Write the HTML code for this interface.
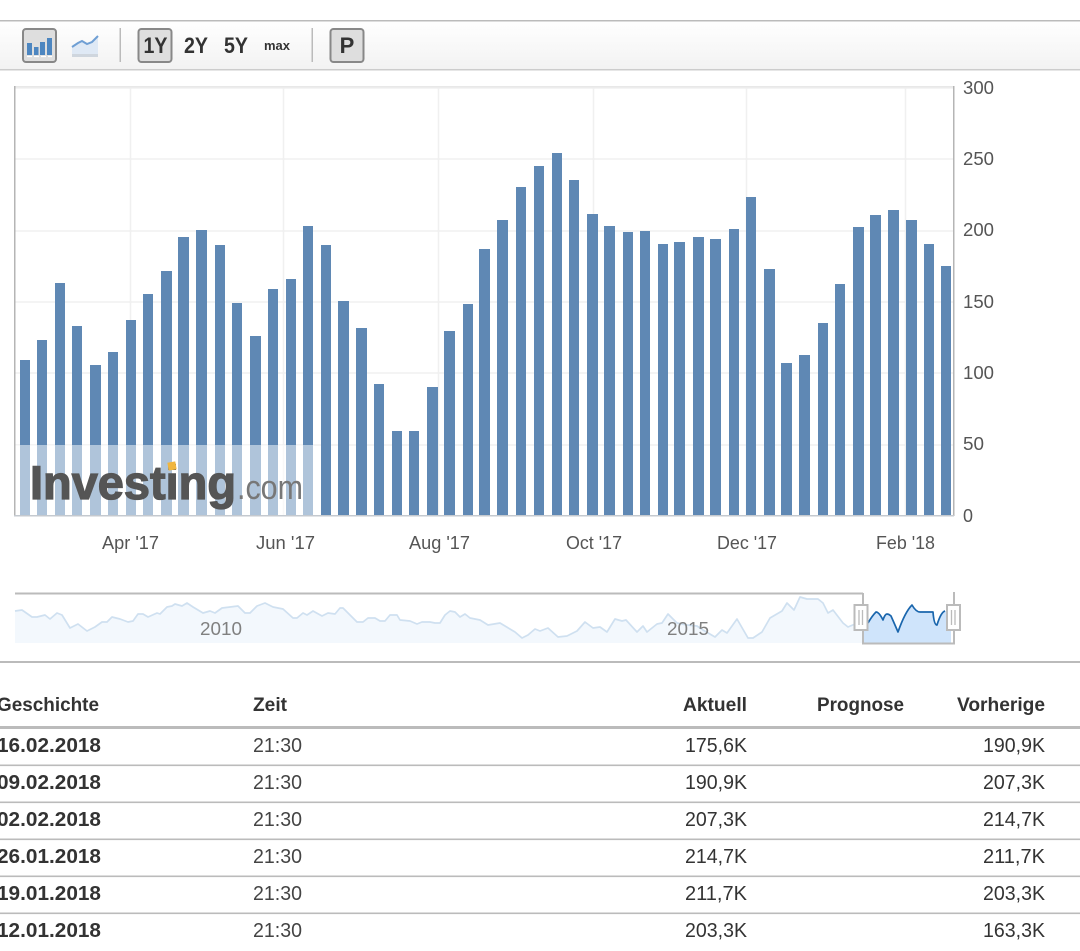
<!DOCTYPE html>
<html lang="de"><head><meta charset="utf-8"><title>Chart</title>
<style>
html,body{margin:0;padding:0;background:#fff;width:1080px;height:951px;overflow:hidden}
svg{display:block;font-family:"Liberation Sans",sans-serif;filter:blur(.3px)}
.ax{font-size:18.5px;fill:#555}
.th{font-size:19.5px;font-weight:bold;fill:#333}
.d{font-size:20.5px;font-weight:bold;fill:#333}
.t{font-size:20px;fill:#444}
.n{font-size:20px;fill:#333;text-anchor:end}
.tb{font-size:22px;font-weight:bold;fill:#333;text-anchor:middle}
</style></head><body>
<svg width="1080" height="951" viewBox="0 0 1080 951" xmlns="http://www.w3.org/2000/svg">
<defs><linearGradient id="g" x1="0" y1="0" x2="0" y2="1"><stop offset="0" stop-color="#fff"/><stop offset="1" stop-color="#f2f2f2"/></linearGradient></defs>
<!-- toolbar -->
<rect x="0" y="20" width="1080" height="50" fill="url(#g)"/>
<rect x="0" y="20" width="1080" height="1.5" fill="#bbb"/>
<rect x="0" y="69" width="1080" height="1.5" fill="#ccc"/>
<rect x="23" y="29" width="33" height="33" rx="3" fill="#dedede" stroke="#888" stroke-width="2"/>
<path d="M27 43h5v12h-5zM34 47h4.500v8h-4.500zM40 42h5v13h-5zM47 38h5v17h-5z" fill="#4d86c0"/>
<path d="M27 56.500h25" stroke="#fff" stroke-width="1.200" stroke-dasharray="5 2"/>
<path d="M72 47l6-4 4-2 5 3 5-2 6-6v20H72z" fill="#dfe9f5"/>
<path d="M72 47l6-4 4-2 5 3 5-2 6-6" fill="none" stroke="#6f9fd4" stroke-width="2"/>
<rect x="72" y="54" width="26" height="3" fill="#cfd6de"/>
<rect x="119.500" y="28" width="1.500" height="34" fill="#bbb"/>
<rect x="138.500" y="29" width="33" height="33" rx="3" fill="#dedede" stroke="#888" stroke-width="2"/>
<text x="155.500" y="53" class="tb" textLength="24" lengthAdjust="spacingAndGlyphs">1Y</text>
<text x="196" y="53" class="tb" textLength="24" lengthAdjust="spacingAndGlyphs">2Y</text>
<text x="236" y="53" class="tb" textLength="24" lengthAdjust="spacingAndGlyphs">5Y</text>
<text x="277" y="50" font-size="13" font-weight="bold" fill="#333" text-anchor="middle" textLength="26" lengthAdjust="spacingAndGlyphs">max</text>
<rect x="311.500" y="28" width="1.500" height="34" fill="#bbb"/>
<rect x="330.500" y="29" width="33" height="33" rx="3" fill="#dedede" stroke="#888" stroke-width="2"/>
<text x="347" y="53" class="tb">P</text>
<!-- grid -->
<path d="M15 88H953M15 159H953M15 231H953M15 302H953M15 373H953M15 445H953M130.500 87V515M283.500 87V515M438.500 87V515M593.500 87V515M746.500 87V515M905.500 87V515" stroke="#f0f0f0" stroke-width="1.500" fill="none"/>
<rect x="14" y="86" width="940" height="1.500" fill="#e8e8e8"/>
<!-- bars -->
<path fill="#5f88b4" d="M20 360V515h10V360zM37 340V515h10V340zM55 283V515h10V283zM72 326V515h10V326zM90 365V515h11V365zM108 352V515h10V352zM126 320V515h10V320zM143 294V515h10V294zM161 271V515h11V271zM178 237V515h11V237zM196 230V515h11V230zM215 245V515h10V245zM232 303V515h10V303zM250 336V515h11V336zM268 289V515h10V289zM286 279V515h10V279zM303 226V515h10V226zM321 245V515h10V245zM338 301V515h11V301zM356 328V515h11V328zM374 384V515h10V384zM392 431V515h10V431zM409 431V515h10V431zM427 387V515h11V387zM444 331V515h11V331zM463 304V515h10V304zM479 249V515h11V249zM497 220V515h11V220zM516 187V515h10V187zM534 166V515h10V166zM552 153V515h10V153zM569 180V515h10V180zM587 214V515h11V214zM604 226V515h11V226zM623 232V515h10V232zM640 231V515h10V231zM658 244V515h10V244zM674 242V515h11V242zM693 237V515h11V237zM710 239V515h11V239zM729 229V515h10V229zM746 197V515h10V197zM764 269V515h11V269zM781 363V515h11V363zM799 355V515h11V355zM818 323V515h10V323zM835 284V515h10V284zM853 227V515h11V227zM870 215V515h11V215zM888 210V515h11V210zM906 220V515h11V220zM924 244V515h10V244zM941 266V515h10V266z"/>
<!-- watermark -->
<rect x="15" y="445" width="299" height="70" fill="#fff" fill-opacity=".5"/>
<text x="30" y="499" font-size="47" font-weight="bold" fill="#555" stroke="#555" stroke-width="1.300" textLength="206" lengthAdjust="spacingAndGlyphs">Investing</text>
<rect x="168" y="462" width="8" height="8" fill="#f0b63f" transform="rotate(-10 172 466)"/>
<text x="237" y="499" font-size="34" fill="#777" textLength="66" lengthAdjust="spacingAndGlyphs">.com</text>
<!-- plot frame -->
<rect x="14" y="86" width="1.500" height="430" fill="#b5b5b5"/>
<rect x="953" y="86" width="1.500" height="430" fill="#b5b5b5"/>
<rect x="14" y="515" width="940" height="1.500" fill="#c4c9cf"/>
<!-- axis labels -->
<text x="963" y="94" class="ax" textLength="31" lengthAdjust="spacingAndGlyphs">300</text>
<text x="963" y="165" class="ax" textLength="31" lengthAdjust="spacingAndGlyphs">250</text>
<text x="963" y="236" class="ax" textLength="31" lengthAdjust="spacingAndGlyphs">200</text>
<text x="963" y="308" class="ax" textLength="31" lengthAdjust="spacingAndGlyphs">150</text>
<text x="963" y="379" class="ax" textLength="31" lengthAdjust="spacingAndGlyphs">100</text>
<text x="963" y="450" class="ax" textLength="21" lengthAdjust="spacingAndGlyphs">50</text>
<text x="963" y="522" class="ax" textLength="10" lengthAdjust="spacingAndGlyphs">0</text>
<text x="102" y="549" class="ax" textLength="57" lengthAdjust="spacingAndGlyphs">Apr '17</text>
<text x="256" y="549" class="ax" textLength="59" lengthAdjust="spacingAndGlyphs">Jun '17</text>
<text x="409" y="549" class="ax" textLength="61" lengthAdjust="spacingAndGlyphs">Aug '17</text>
<text x="566" y="549" class="ax" textLength="56" lengthAdjust="spacingAndGlyphs">Oct '17</text>
<text x="717" y="549" class="ax" textLength="60" lengthAdjust="spacingAndGlyphs">Dec '17</text>
<text x="876" y="549" class="ax" textLength="59" lengthAdjust="spacingAndGlyphs">Feb '18</text>
<!-- navigator -->
<rect x="15" y="592.500" width="848" height="2" fill="#bbb"/>
<path fill="#f3f8fd" d="M15 611L22 610 32 617 37 617 45 615 50 619 57 613 62 615 70 628 78 624 87 631 95 627 102 622 107 622 112 617 120 619 128 622 133 621 138 614 143 614 148 617 157 613 160 614 167 607 172 606 175 604 182 606 187 603 193 607 203 613 210 611 215 613 222 608 230 607 238 606 245 613 250 613 257 606 265 603 273 607 283 609 293 618 297 618 303 613 307 615 313 611 322 616 328 613 335 614 340 608 343 608 348 613 357 622 363 622 368 618 375 618 380 621 385 621 390 615 397 615 400 620 410 621 417 624 422 622 430 622 435 623 440 623 445 615 450 611 455 612 460 617 465 614 470 618 480 620 488 625 500 623 515 632 522 638 528 635 535 629 540 631 548 628 558 637 567 636 577 631 585 622 593 628 600 627 607 632 615 619 622 621 626 620 637 632 643 626 647 632 657 624 662 623 668 614 677 623 687 625 697 626 703 630 715 637 722 630 727 633 737 619 748 638 753 638 762 632 770 618 782 611 787 603 794 610 800 597 807 599 818 599 823 603 828 613 833 610 843 623 848 627 855 624 862 623V643H15Z"/>
<path fill="none" stroke="#cfe0f0" stroke-width="1.700" stroke-linejoin="round" d="M15 611L22 610 32 617 37 617 45 615 50 619 57 613 62 615 70 628 78 624 87 631 95 627 102 622 107 622 112 617 120 619 128 622 133 621 138 614 143 614 148 617 157 613 160 614 167 607 172 606 175 604 182 606 187 603 193 607 203 613 210 611 215 613 222 608 230 607 238 606 245 613 250 613 257 606 265 603 273 607 283 609 293 618 297 618 303 613 307 615 313 611 322 616 328 613 335 614 340 608 343 608 348 613 357 622 363 622 368 618 375 618 380 621 385 621 390 615 397 615 400 620 410 621 417 624 422 622 430 622 435 623 440 623 445 615 450 611 455 612 460 617 465 614 470 618 480 620 488 625 500 623 515 632 522 638 528 635 535 629 540 631 548 628 558 637 567 636 577 631 585 622 593 628 600 627 607 632 615 619 622 621 626 620 637 632 643 626 647 632 657 624 662 623 668 614 677 623 687 625 697 626 703 630 715 637 722 630 727 633 737 619 748 638 753 638 762 632 770 618 782 611 787 603 794 610 800 597 807 599 818 599 823 603 828 613 833 610 843 623 848 627 855 624 862 623"/>
<text x="200" y="635" font-size="18.500" fill="#808080" textLength="42" lengthAdjust="spacingAndGlyphs">2010</text>
<text x="667" y="635" font-size="18.500" fill="#808080" textLength="42" lengthAdjust="spacingAndGlyphs">2015</text>
<path fill="#cfe4fb" d="M863 628L868 623Q872 616 876 612Q879 612 883 620Q885 614 887 614T891 616Q895 625 898 632Q905 612 912 605Q916 612 920 612L933 612Q934 625 937 625Q941 612 945 611H951V643H863Z"/>
<path fill="none" stroke="#1a66ad" stroke-width="1.700" stroke-linejoin="round" d="M868 623Q872 616 876 612Q879 612 883 620Q885 614 887 614T891 616Q895 625 898 632Q905 612 912 605Q916 612 920 612L933 612Q934 625 937 625Q941 612 945 611"/>
<path d="M863 593V643.500H954V592" fill="none" stroke="#bbb" stroke-width="2"/>
<rect x="854.500" y="605" width="13" height="25" fill="#fff" stroke="#bbb" stroke-width="2"/>
<rect x="947" y="605" width="13" height="25" fill="#fff" stroke="#bbb" stroke-width="2"/>
<path d="M859 610v15M862.500 610v15M951.500 610v15M955 610v15" stroke="#bbb" stroke-width="1.300"/>
<rect x="0" y="661" width="1080" height="2" fill="#bbb"/>
<!-- table -->
<text x="-3" y="711" class="th" textLength="102" lengthAdjust="spacingAndGlyphs">Geschichte</text>
<text x="253" y="711" class="th" textLength="34" lengthAdjust="spacingAndGlyphs">Zeit</text>
<text x="683" y="711" class="th" textLength="64" lengthAdjust="spacingAndGlyphs">Aktuell</text>
<text x="817" y="711" class="th" textLength="87" lengthAdjust="spacingAndGlyphs">Prognose</text>
<text x="957" y="711" class="th" textLength="88" lengthAdjust="spacingAndGlyphs">Vorherige</text>
<rect x="0" y="726" width="1080" height="3" fill="#bbb"/>
<rect x="0" y="764.500" width="1080" height="1.600" fill="#bbb"/>
<rect x="0" y="801.500" width="1080" height="1.600" fill="#bbb"/>
<rect x="0" y="838.500" width="1080" height="1.600" fill="#bbb"/>
<rect x="0" y="875.500" width="1080" height="1.600" fill="#bbb"/>
<rect x="0" y="912.500" width="1080" height="1.600" fill="#bbb"/>
<text x="-3" y="752" class="d" textLength="104" lengthAdjust="spacingAndGlyphs">16.02.2018</text><text x="253" y="752" class="t" textLength="49" lengthAdjust="spacingAndGlyphs">21:30</text><text x="747" y="752" class="n" textLength="62" lengthAdjust="spacingAndGlyphs">175,6K</text><text x="1045" y="752" class="n" textLength="62" lengthAdjust="spacingAndGlyphs">190,9K</text>
<text x="-3" y="789" class="d" textLength="104" lengthAdjust="spacingAndGlyphs">09.02.2018</text><text x="253" y="789" class="t" textLength="49" lengthAdjust="spacingAndGlyphs">21:30</text><text x="747" y="789" class="n" textLength="62" lengthAdjust="spacingAndGlyphs">190,9K</text><text x="1045" y="789" class="n" textLength="62" lengthAdjust="spacingAndGlyphs">207,3K</text>
<text x="-3" y="826" class="d" textLength="104" lengthAdjust="spacingAndGlyphs">02.02.2018</text><text x="253" y="826" class="t" textLength="49" lengthAdjust="spacingAndGlyphs">21:30</text><text x="747" y="826" class="n" textLength="62" lengthAdjust="spacingAndGlyphs">207,3K</text><text x="1045" y="826" class="n" textLength="62" lengthAdjust="spacingAndGlyphs">214,7K</text>
<text x="-3" y="863" class="d" textLength="104" lengthAdjust="spacingAndGlyphs">26.01.2018</text><text x="253" y="863" class="t" textLength="49" lengthAdjust="spacingAndGlyphs">21:30</text><text x="747" y="863" class="n" textLength="62" lengthAdjust="spacingAndGlyphs">214,7K</text><text x="1045" y="863" class="n" textLength="62" lengthAdjust="spacingAndGlyphs">211,7K</text>
<text x="-3" y="900" class="d" textLength="104" lengthAdjust="spacingAndGlyphs">19.01.2018</text><text x="253" y="900" class="t" textLength="49" lengthAdjust="spacingAndGlyphs">21:30</text><text x="747" y="900" class="n" textLength="62" lengthAdjust="spacingAndGlyphs">211,7K</text><text x="1045" y="900" class="n" textLength="62" lengthAdjust="spacingAndGlyphs">203,3K</text>
<text x="-3" y="937" class="d" textLength="104" lengthAdjust="spacingAndGlyphs">12.01.2018</text><text x="253" y="937" class="t" textLength="49" lengthAdjust="spacingAndGlyphs">21:30</text><text x="747" y="937" class="n" textLength="62" lengthAdjust="spacingAndGlyphs">203,3K</text><text x="1045" y="937" class="n" textLength="62" lengthAdjust="spacingAndGlyphs">163,3K</text>
</svg>
</body></html>
